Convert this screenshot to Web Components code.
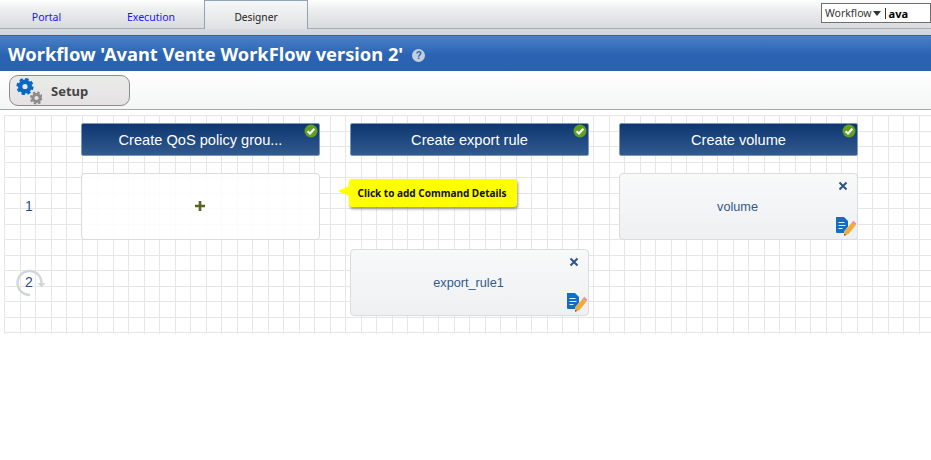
<!DOCTYPE html>
<html>
<head>
<meta charset="utf-8">
<title>Workflow designer</title>
<style>
  html, body { margin: 0; padding: 0; background: #fff; }
  body { font-family: "Liberation Sans", Arial, sans-serif; width: 931px; height: 460px; overflow: hidden; }
</style>
</head>
<body>
<top-tabs>
  <tab-item>Portal</tab-item>
  <tab-item>Execution</tab-item>
  <tab-item active>Designer</tab-item>
</top-tabs>
<title-bar>Workflow 'Avant Vente WorkFlow version 2'</title-bar>
<tool-bar><setup-button>Setup</setup-button></tool-bar>
<workflow-board>
  <span></span>
  <column-head>Create QoS policy grou...</column-head>
  <column-head>Create export rule</column-head>
  <column-head>Create volume</column-head>

  <row-label>1</row-label>
  <command-cell empty><note-tip>Click to add Command Details</note-tip></command-cell>
  <span></span>
  <command-cell>volume</command-cell>

  <row-label repeat>2</row-label>
  <span></span>
  <command-cell>export_rule1</command-cell>
  <span></span>
</workflow-board>

<script>
class TopTabs extends HTMLElement {
  constructor() {
    super();
    this.attachShadow({ mode: "open" });
  }

  connectedCallback() {
    this.shadowRoot.innerHTML = `
    <style>
      :host {
        display: flex;
        height: 36px;
        box-sizing: border-box;
        background: linear-gradient(#fdfdfd, #e9ebec 12px, #d3d6d9 34px);
        border-bottom: 1px solid #3b5f93;
        position: relative;
      }
      .tabs {
        display: flex;
        height: 29px;
        width: 100%;
        box-sizing: border-box;
        border-bottom: 1px solid #a4adb6;
      }
      .search {
        position: absolute;
        top: 3px;
        right: 0;
        width: 110px;
        height: 20px;
        box-sizing: border-box;
        border: 1px solid #6f6f6f;
        background: #fff;
        display: flex;
        align-items: center;
        padding-left: 3px;
        font: 10.5px "Noto Sans", sans-serif;
        color: #333;
      }
      .arrow { width: 0; height: 0; margin: 1px 0 0 1px; border: 4px solid transparent; border-top: 5px solid #333; border-bottom: 0; }
      .caret { width: 1px; height: 11px; background: #333; margin: 0 3px 0 4px; }
      b { color: #000; font-size: 11px; }
    </style>
    <div class="tabs"><slot></slot></div>
    <div class="search">Workflow<span class="arrow"></span><span class="caret"></span><b>ava</b></div>
    `;
  }
}

class TabItem extends HTMLElement {
  constructor() {
    super();
    this.attachShadow({ mode: "open" });
  }

  connectedCallback() {
    this.shadowRoot.innerHTML = `
    <style>
      :host {
        display: flex;
        align-items: center;
        justify-content: center;
        box-sizing: border-box;
        height: 29px;
        width: 102px;
        padding-top: 5px;
        font: 10.5px "Noto Sans", sans-serif;
        color: #1a12ff;
      }
      :host(:first-child) { width: 93px; }
      :host(:nth-child(2)) { width: 111px; padding-left: 5px; }
      :host([active]) {
        width: 104px;
        color: #222;
        font-size: 10.2px;
        border: 1px solid #8fa3bd;
        border-bottom: 0;
        background: linear-gradient(#f6f7f7, #dfe1e3);
        padding-top: 4px;
      }
    </style>
    <slot></slot>
    `;
  }
}

class TitleBar extends HTMLElement {
  constructor() {
    super();
    this.attachShadow({ mode: "open" });
  }

  connectedCallback() {
    this.shadowRoot.innerHTML = `
    <style>
      :host {
        display: flex;
        align-items: center;
        height: 36px;
        box-sizing: border-box;
        padding: 0 0 0 8px;
        background: linear-gradient(#4a80c8, #2a63b2 55%, #2a62b0);
        border-bottom: 1px solid #fff;
        font: bold 18.3px "Noto Sans", sans-serif;
        color: #fff;
      }
      .help {
        width: 13px;
        height: 13px;
        margin: 3px 0 0 9px;
        border-radius: 50%;
        background: #c3cfe0;
        color: #2a63b2;
        font: bold 10px/13px "Liberation Sans", sans-serif;
        text-align: center;
      }
    </style>
    <slot></slot><span class="help">?</span>
    `;
  }
}

class ToolBar extends HTMLElement {
  constructor() {
    super();
    this.attachShadow({ mode: "open" });
  }

  connectedCallback() {
    this.shadowRoot.innerHTML = `
    <style>
      :host {
        display: flex;
        align-items: center;
        height: 38px;
        box-sizing: border-box;
        padding: 0 0 0 9px;
        background: linear-gradient(#fff, #f4f5f5);
        border-bottom: 1px solid #a9a9a9;
      }
    </style>
    <slot></slot>
    `;
  }
}

class SetupButton extends HTMLElement {
  constructor() {
    super();
    this.attachShadow({ mode: "open" });
  }

  connectedCallback() {
    this.shadowRoot.innerHTML = `
    <style>
      :host {
        display: flex;
        align-items: center;
        width: 121px;
        height: 31px;
        box-sizing: border-box;
        border: 1px solid #8c8c8c;
        border-radius: 9px;
        padding-top: 1px;
        background: linear-gradient(#e9ece9, #e6e1e3);
        font: bold 13px "Noto Sans", sans-serif;
        color: #444;
      }
      svg { display: block; margin: -1px 9px 0 5px; flex: none; }
    </style>
    <svg width="27" height="30" viewBox="0 0 27 30">
      <circle cx="10" cy="10.500" r="4.800" fill="none" stroke="#0a68c4" stroke-width="4.400"/>
      <circle cx="10" cy="10.500" r="7.400" fill="none" stroke="#0a68c4" stroke-width="2.400" stroke-dasharray="3.400 2.410"/>
      <circle cx="21.500" cy="22" r="3.600" fill="none" stroke="#8c8c8c" stroke-width="3"/>
      <circle cx="21.500" cy="22" r="5.600" fill="none" stroke="#8c8c8c" stroke-width="2" stroke-dasharray="2.500 1.900"/>
    </svg>
    <slot></slot>
    `;
  }
}

class WorkflowBoard extends HTMLElement {
  constructor() {
    super();
    this.attachShadow({ mode: "open" });
  }

  connectedCallback() {
    this.shadowRoot.innerHTML = `
    <style>
      :host {
        display: grid;
        grid-template-columns: 47px 239px 239px 239px;
        grid-template-rows: 41px 67px 67px;
        column-gap: 30px;
        row-gap: 9px;
        align-content: start;
        width: 927px;
        height: 219px;
        box-sizing: border-box;
        margin: 5px 0 0 4px;
        padding-top: 8px;
        background-color: #fff;
        /* lines fall 16px then 15px apart, so the tile is 31px with two lines */
        background-image:
          linear-gradient(to right, #e6e6e6 1px, transparent 1px, transparent 16px, #e6e6e6 16px, #e6e6e6 17px, transparent 17px),
          linear-gradient(to bottom, #e6e6e6 1px, transparent 1px, transparent 16px, #e6e6e6 16px, #e6e6e6 17px, transparent 17px);
        background-size: 31px 31px;
      }
    </style>
    <slot></slot>
    `;
  }
}

class ColumnHead extends HTMLElement {
  constructor() {
    super();
    this.attachShadow({ mode: "open" });
  }

  connectedCallback() {
    this.shadowRoot.innerHTML = `
    <style>
      :host {
        display: flex;
        align-items: center;
        justify-content: center;
        position: relative;
        box-sizing: border-box;
        margin-bottom: 8px;
        border: 1px solid #7f97b7;
        border-radius: 2px;
        background: linear-gradient(#0e3670, #315a8f);
        color: #fff;
        font: 14.6px "Liberation Sans", sans-serif;
      }
      svg { position: absolute; top: 0; right: 1px; }
    </style>
    <slot></slot>
    <svg width="14" height="14" viewBox="0 0 14 14">
      <circle cx="7" cy="7" r="6.500" fill="#5fa01f"/>
      <path d="M3.600 7.200 6 9.500 10.400 4.800" fill="none" stroke="#fff" stroke-width="2.200"/>
    </svg>
    `;
  }
}

class RowLabel extends HTMLElement {
  constructor() {
    super();
    this.attachShadow({ mode: "open" });
  }

  connectedCallback() {
    const repeat = this.hasAttribute("repeat");
    this.shadowRoot.innerHTML = `
    <style>
      :host {
        display: flex;
        align-items: center;
        justify-content: center;
        box-sizing: border-box;
        width: 50px;
        padding-bottom: 1px;
        color: #1f4f8f;
        font: 14px "Liberation Sans", sans-serif;
        position: relative;
      }
      svg { position: absolute; left: 12px; top: 50%; margin-top: -14px; }
    </style>
    ${repeat ? `<svg width="32" height="28" viewBox="0 0 32 28">
      <path d="M25.500 14.500A12 12 0 1 0 14 26" fill="none" stroke="#d0d6dc" stroke-width="2.400"/>
      <path d="M21.500 14h8l-4 4.500z" fill="#d0d6dc"/>
    </svg>` : ""}
    <slot></slot>
    `;
  }
}

class CommandCell extends HTMLElement {
  constructor() {
    super();
    this.attachShadow({ mode: "open" });
  }

  connectedCallback() {
    const empty = this.hasAttribute("empty");
    this.shadowRoot.innerHTML = `
    <style>
      :host {
        display: flex;
        align-items: center;
        justify-content: center;
        position: relative;
        box-sizing: border-box;
        border: 1px solid #dcdcdc;
        border-radius: 4px;
        padding-right: 2px;
        background: linear-gradient(#f8f9f9, #eef0f2);
        color: #34598a;
        font: 12.7px "Liberation Sans", sans-serif;
      }
      :host([empty]) { background: rgba(255, 255, 255, .85); }
      .plus { display: block; margin-bottom: 2px; }
      .close { position: absolute; top: 7px; right: 9px; }
      .edit { position: absolute; right: 1px; bottom: 3px; }
    </style>
    ${empty ? `<svg class="plus" width="12" height="12" viewBox="0 0 12 12"><path d="M6 1v10M1 6h10" stroke="#56651f" stroke-width="2.600"/></svg><slot></slot>` : `
    <slot></slot>
    <svg class="close" width="10" height="10" viewBox="0 0 10 10"><path d="M1.500 1.500l7 7M8.500 1.500l-7 7" stroke="#2f5582" stroke-width="2"/></svg>
    <svg class="edit" width="20" height="20" viewBox="0 0 20 20">
      <path d="M0 1h8l4 4v12H1a1 1 0 0 1-1-1z" fill="#0f6fc8"/>
      <path d="M2.500 6.500h6M2.500 9.500h7M2.500 12.500h4" stroke="#e4eef8" stroke-width="1.200"/>
      <path d="M8 19.800l.8-4.800 7-8.500 3.700 3.100-7 8.400z" fill="#f4ab33" stroke="#f0f1f3" stroke-width=".8" paint-order="stroke"/>
      <path d="M15.800 6.500l1.400-1.700 3 2.600-.7 2.200z" fill="#ef86a5"/>
      <path d="M8 19.800l.4-2.400 1.700 1.500z" fill="#555"/>
    </svg>`}
    `;
  }
}

class NoteTip extends HTMLElement {
  constructor() {
    super();
    this.attachShadow({ mode: "open" });
  }

  connectedCallback() {
    this.shadowRoot.innerHTML = `
    <style>
      :host {
        position: absolute;
        left: 267px;
        top: 5px;
        width: 168px;
        height: 28px;
        box-sizing: border-box;
        padding-right: 2px;
        display: flex;
        align-items: center;
        justify-content: center;
        background: #ffff00;
        border-radius: 3px;
        box-shadow: 1px 2px 3px rgba(0, 0, 0, .4);
        color: #111;
        font: bold 10px "Noto Sans", sans-serif;
        white-space: nowrap;
      }
      i {
        position: absolute;
        left: -11px;
        top: 7px;
        width: 0;
        height: 0;
        border-style: solid;
        border-width: 5.500px 11px 5.500px 0;
        border-color: transparent #ffff00 transparent transparent;
      }
    </style>
    <i></i><slot></slot>
    `;
  }
}

customElements.define("top-tabs", TopTabs);
customElements.define("tab-item", TabItem);
customElements.define("title-bar", TitleBar);
customElements.define("tool-bar", ToolBar);
customElements.define("setup-button", SetupButton);
customElements.define("workflow-board", WorkflowBoard);
customElements.define("column-head", ColumnHead);
customElements.define("row-label", RowLabel);
customElements.define("command-cell", CommandCell);
customElements.define("note-tip", NoteTip);
</script>
</body>
</html>
